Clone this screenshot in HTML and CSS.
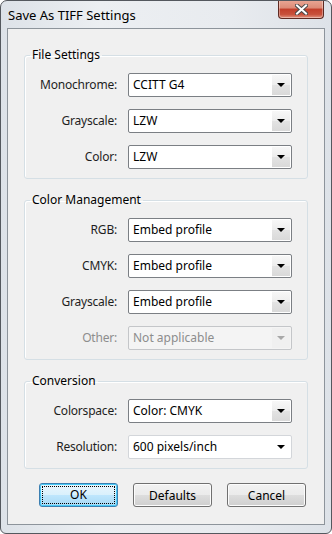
FILE: index.html
```html
<!DOCTYPE html>
<html lang="en">
<head>
  <meta charset="UTF-8" />
  <title>Save As TIFF Settings</title>
  <link rel="stylesheet" href="styles.css">
</head>
<body>

  <div class="window">
    <!-- barra de título -->
    <div class="titlebar">
      <span class="title">Save As TIFF Settings</span>
      <button class="close-btn">
        <svg width="13" height="11" viewBox="0 0 13 11">
          <path d="M2 1.5 L11 9.5 M11 1.5 L2 9.5" stroke="#4a4a4a" stroke-width="4" stroke-linecap="square" />
          <path d="M2 1.5 L11 9.5 M11 1.5 L2 9.5" stroke="#ffffff" stroke-width="2" stroke-linecap="square" />
        </svg>
      </button>
    </div>

    <div class="client">

      <fieldset class="group">
        <legend>File Settings</legend>
        <div class="rows">
          <label>Monochrome:</label>
          <div class="combo"><span class="value">CCITT G4</span><span class="drop"><i class="arrow"></i></span></div>

          <label>Grayscale:</label>
          <div class="combo"><span class="value">LZW</span><span class="drop"><i class="arrow"></i></span></div>

          <label>Color:</label>
          <div class="combo"><span class="value">LZW</span><span class="drop"><i class="arrow"></i></span></div>
        </div>
      </fieldset>

      <fieldset class="group">
        <legend>Color Management</legend>
        <div class="rows">
          <label>RGB:</label>
          <div class="combo"><span class="value">Embed profile</span><span class="drop"><i class="arrow"></i></span></div>

          <label>CMYK:</label>
          <div class="combo"><span class="value">Embed profile</span><span class="drop"><i class="arrow"></i></span></div>

          <label>Grayscale:</label>
          <div class="combo"><span class="value">Embed profile</span><span class="drop"><i class="arrow"></i></span></div>

          <label class="disabled">Other:</label>
          <div class="combo disabled"><span class="value">Not applicable</span><span class="drop"><i class="arrow"></i></span></div>
        </div>
      </fieldset>

      <fieldset class="group">
        <legend>Conversion</legend>
        <div class="rows">
          <label>Colorspace:</label>
          <div class="combo"><span class="value">Color: CMYK</span><span class="drop"><i class="arrow"></i></span></div>

          <label>Resolution:</label>
          <div class="combo flat"><span class="value">600 pixels/inch</span><span class="drop"><i class="arrow"></i></span></div>
        </div>
      </fieldset>

      <div class="buttons">
        <button class="btn default"><span class="focus">OK</span></button>
        <button class="btn">Defaults</button>
        <button class="btn">Cancel</button>
      </div>

    </div>
  </div>

</body>
</html>
```

FILE: styles.css
```css
body {
  margin: 0;
  font-family: 'Segoe UI', 'Noto Sans', sans-serif;
  font-size: 12px;
  color: #1e1e1e;
  background: #ffffff;
}

.window {
  width: 332px;
  height: 534px;
  box-sizing: border-box;
  border: 1px solid #54585e;
  border-radius: 7px 7px 6px 6px;
  background: linear-gradient(to right, #dde2e8, #eceff2 30%, #e8ebef 70%, #dde2e8);
  overflow: hidden;
}

/* barra de título */
.titlebar {
  height: 27px;
  display: flex;
  align-items: flex-start;
  justify-content: space-between;
}

.title {
  margin: 5px 0 0 7px;
  font-size: 13px;
  line-height: 18px;
  color: #000;
}

.close-btn {
  width: 46px;
  height: 19px;
  margin-right: 7px;
  margin-top: -1px;
  padding: 0;
  border: 1px solid #5e2a22;
  border-top: none;
  border-radius: 0 0 4px 4px;
  background: linear-gradient(to bottom, #eaa896, #dc8a76 45%, #c23e2a 50%, #c8513b 80%, #e29480);
  box-shadow: inset 0 0 0 1px rgba(255, 255, 255, 0.35);
  display: flex;
  align-items: center;
  justify-content: center;
}

.client {
  margin-left: 6px;
  width: 318px;
  height: 497px;
  box-sizing: border-box;
  border: 1px solid #8d949b;
  background: #f0f0f0;
  padding-top: 18px;
}

/* caixas de grupo */
.group {
  margin: 0 16px 13px;
  padding: 10px 15px 9px 0;
  border: 1px solid #d5dfe5;
  border-radius: 3px;
  box-shadow: inset 1px 1px 0 #fff;
}

.group legend {
  margin-left: 5px;
  padding: 0 2px;
  line-height: 16px;
  color: #000;
}

.rows {
  display: grid;
  grid-template-columns: 92px 164px;
  column-gap: 11px;
  row-gap: 12px;
}

.rows label {
  text-align: right;
  line-height: 24px;
  letter-spacing: -0.2px;
}

.rows label.disabled {
  color: #8d8d8d;
}

/* combos */
.combo {
  height: 24px;
  box-sizing: border-box;
  border: 1px solid #7b7f84;
  border-radius: 2px;
  background: #fff;
  display: flex;
}

.combo .value {
  flex: 1;
  padding-left: 4px;
  line-height: 22px;
  color: #000;
}

.combo .drop {
  width: 18px;
  margin: 1px;
  background: linear-gradient(to bottom, #f7f7f7, #ededed 50%, #e3e3e3 51%, #d9d9d9);
  display: flex;
  align-items: center;
  justify-content: center;
}

.arrow {
  width: 0;
  height: 0;
  border-left: 4px solid transparent;
  border-right: 4px solid transparent;
  border-top: 4px solid #000;
}

.combo.flat {
  border-color: #d3d6da;
}

.combo.flat .drop {
  background: none;
}

.combo.disabled {
  border-color: #c4c6c9;
  background: #f4f4f4;
}

.combo.disabled .value {
  color: #8d8d8d;
}

.combo.disabled .drop {
  background: #f0f0f0;
}

.combo.disabled .arrow {
  border-top-color: #a8a8a8;
}

/* botões */
.buttons {
  margin-top: 14px;
  padding-left: 31px;
  display: flex;
  gap: 15px;
}

.btn {
  width: 79px;
  height: 24px;
  padding: 0;
  font-family: inherit;
  font-size: 12px;
  color: #000;
  border: 1px solid #707070;
  border-radius: 3px;
  background: linear-gradient(to bottom, #f2f2f2, #ebebeb 50%, #dddddd 51%, #cfcfcf);
  box-shadow: inset 0 0 0 1px #fcfcfc;
}

.btn.default {
  border-color: #3c7fb1;
  background: linear-gradient(to bottom, #eaf6fd, #d9f0fc 50%, #bee6fd 51%, #a7d9f5);
  box-shadow: inset 0 0 0 1px #48cbf7;
  padding: 2px;
}

.btn .focus {
  display: block;
  height: 100%;
  box-sizing: border-box;
  border: 1px dotted #000;
  line-height: 16px;
}
```
